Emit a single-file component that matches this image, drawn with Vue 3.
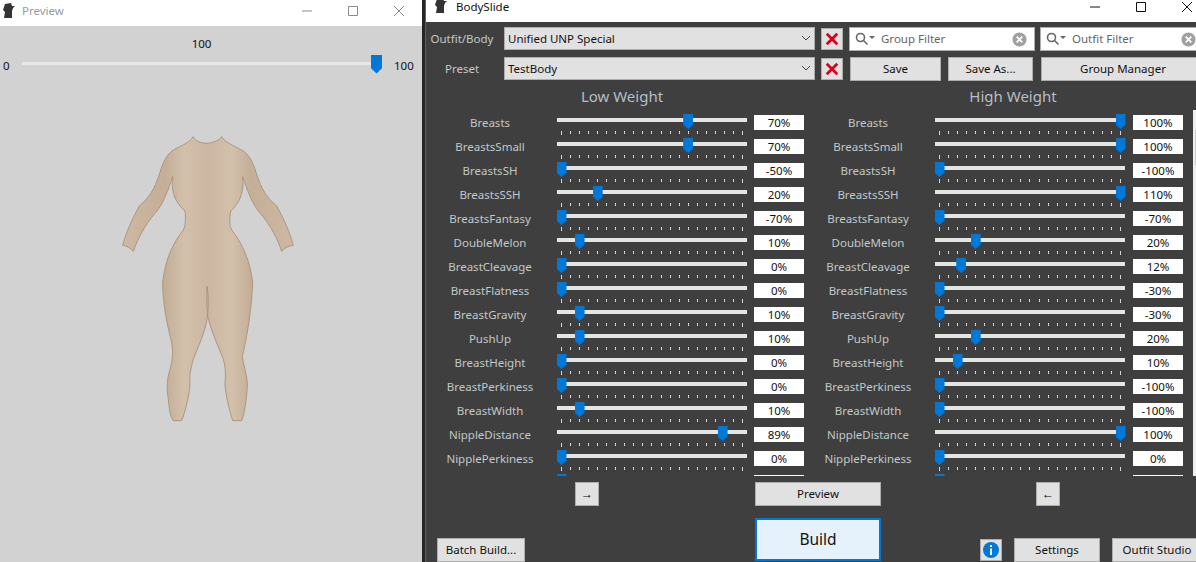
<template>
  <div class="desktop">
    <section class="preview">
      <header class="titlebar preview-bar">
        <svg class="logo" viewBox="0 0 12 16"><path d="M2 1 8 0 9 3 12 3 10 5 9 8 9 15 1 15 2 9 0 7Z" /></svg>
        <span class="preview-title">Preview</span>
        <span class="spacer"></span>
        <span class="win"><svg viewBox="0 0 10 10"><path d="M0 5H10" /></svg></span>
        <span class="win"><svg viewBox="0 0 10 10"><path d="M.5 .5H9.500V9.500H.5Z" /></svg></span>
        <span class="win"><svg viewBox="0 0 10 10"><path d="M0 0 10 10M10 0 0 10" /></svg></span>
      </header>
      <div class="scale-value">100</div>
      <div class="scale">
        <span class="scale-min">0</span>
        <span class="scale-track"><i class="scale-thumb"></i></span>
        <span class="scale-max">100</span>
      </div>
      <svg class="figure" viewBox="0 0 600 900" role="img" aria-label="Body preview">
        <defs>
          <linearGradient id="skin" x1="0" x2="1" y1="0" y2="0">
            <stop offset="0" stop-color="#cdb9a3" />
            <stop offset=".25" stop-color="#c4ae98" />
            <stop offset=".36" stop-color="#d3c0ab" />
            <stop offset=".5" stop-color="#cbb7a2" />
            <stop offset=".64" stop-color="#d3c0ab" />
            <stop offset=".75" stop-color="#c4ae98" />
            <stop offset="1" stop-color="#cdb9a3" />
          </linearGradient>
        </defs>
        <path fill="url(#skin)" stroke="#ad9680" stroke-width="3" d="M250 32C240 50 215 58 190 72C170 85 158 110 148 145C133 190 118 215 88 240C66 280 48 320 38 358C50 360 62 365 70 376C85 335 103 300 135 262C160 235 175 190 188 152C184 190 190 225 225 255C228 280 226 300 220 312C190 350 165 400 158 470C158 530 170 590 185 650C190 680 188 700 180 730C170 760 170 790 175 820C178 850 180 870 190 884L215 884C225 860 240 800 240 770C238 750 240 735 250 700C265 660 285 620 292 575C296 540 296 510 291 480C290 510 290 540 294 575C305 620 325 660 340 700C350 735 345 755 345 780C350 820 360 860 368 884L395 884C405 860 412 800 412 770C410 740 400 720 397 690C410 640 425 550 428 470C420 400 395 350 365 312C358 300 358 280 362 255C395 225 402 190 398 152C411 190 426 235 451 262C483 300 501 335 515 376C525 365 535 360 550 358C540 320 522 280 500 240C470 215 455 190 440 145C430 110 418 85 395 72C370 58 345 50 335 32C330 45 300 52 290 52C275 52 255 45 250 32Z" />
      </svg>
    </section>

    <div class="divider"></div>

    <section class="bodyslide">
      <header class="titlebar main-bar">
        <svg class="logo main-logo" viewBox="0 0 12 16"><path d="M2 1 8 0 9 3 12 3 10 5 9 8 9 15 1 15 2 9 0 7Z" /></svg>
        <span class="main-title">BodySlide</span>
        <span class="spacer"></span>
        <span class="win"><svg viewBox="0 0 10 10"><path d="M0 5H10" /></svg></span>
        <span class="win"><svg viewBox="0 0 10 10"><path d="M.5 .5H9.500V9.500H.5Z" /></svg></span>
        <span class="win"><svg viewBox="0 0 10 10"><path d="M0 0 10 10M10 0 0 10" /></svg></span>
      </header>

      <div class="toolbar first">
        <label class="tool-label">Outfit/Body</label>
        <div class="combo">Unified UNP Special<svg viewBox="0 0 10 6"><path d="M1 1 5 5 9 1" /></svg></div>
        <button class="remove"><svg viewBox="0 0 16 16"><path d="M2 2 14 14M14 2 2 14" /></svg></button>
        <div class="search group">
          <svg class="lens" viewBox="0 0 20 14"><circle cx="5.500" cy="5.500" r="4" /><path d="M8.500 8.500 12.500 12.500" /><path class="caret" d="M14 4H20L17 7Z" /></svg>
          <span class="search-text">Group Filter</span>
          <svg class="clear" viewBox="0 0 16 16"><circle cx="8" cy="8" r="7.500" /><path d="M5 5 11 11M11 5 5 11" /></svg>
        </div>
        <div class="search outfit">
          <svg class="lens" viewBox="0 0 20 14"><circle cx="5.500" cy="5.500" r="4" /><path d="M8.500 8.500 12.500 12.500" /><path class="caret" d="M14 4H20L17 7Z" /></svg>
          <span class="search-text">Outfit Filter</span>
          <svg class="clear" viewBox="0 0 16 16"><circle cx="8" cy="8" r="7.500" /><path d="M5 5 11 11M11 5 5 11" /></svg>
        </div>
      </div>

      <div class="toolbar second">
        <label class="tool-label">Preset</label>
        <div class="combo">TestBody<svg viewBox="0 0 10 6"><path d="M1 1 5 5 9 1" /></svg></div>
        <button class="remove"><svg viewBox="0 0 16 16"><path d="M2 2 14 14M14 2 2 14" /></svg></button>
        <button class="btn save">Save</button>
        <button class="btn save-as">Save As...</button>
        <button class="btn manager">Group Manager</button>
      </div>

      <div class="headings">
        <h2>Low Weight</h2>
        <h2>High Weight</h2>
      </div>

      <div class="sliders">
        <div class="columns">
          <div v-for="(side, i) in sides" :key="i" class="column" :class="{ high: i === 1 }">
            <div v-for="row in rows" :key="row.name" class="row">
              <span class="row-label">{{ row.name }}</span>
              <div class="slider">
                <i class="track"></i>
                <i class="thumb" :style="{ left: thumbLeft(row[side]) }"></i>
                <div class="ticks"><i v-for="n in 21" :key="n"></i></div>
              </div>
              <span class="value">{{ row[side] }}%</span>
            </div>
            <div class="row">
              <span class="row-label"></span>
              <div class="slider"><i class="thumb" style="left: -0.5px"></i></div>
              <span class="value"></span>
            </div>
          </div>
        </div>
        <div class="scrollbar"><i></i></div>
      </div>

      <div class="actions">
        <button class="btn arrow to-high">→</button>
        <button class="btn preview-btn">Preview</button>
        <button class="btn arrow to-low">←</button>
      </div>

      <div class="footer">
        <button class="btn batch">Batch Build...</button>
        <button class="build">Build</button>
        <button class="btn info">
          <svg viewBox="0 0 16 16"><circle cx="8" cy="8" r="8" /><rect x="7" y="3" width="2" height="2" /><rect x="7" y="6.500" width="2" height="6.500" /></svg>
        </button>
        <button class="btn settings">Settings</button>
        <button class="btn studio">Outfit Studio</button>
      </div>
    </section>
  </div>
</template>

<script setup>
const sides = ['low', 'high']

const rows = [
  { name: 'Breasts', low: 70, high: 100 },
  { name: 'BreastsSmall', low: 70, high: 100 },
  { name: 'BreastsSH', low: -50, high: -100 },
  { name: 'BreastsSSH', low: 20, high: 110 },
  { name: 'BreastsFantasy', low: -70, high: -70 },
  { name: 'DoubleMelon', low: 10, high: 20 },
  { name: 'BreastCleavage', low: 0, high: 12 },
  { name: 'BreastFlatness', low: 0, high: -30 },
  { name: 'BreastGravity', low: 10, high: -30 },
  { name: 'PushUp', low: 10, high: 20 },
  { name: 'BreastHeight', low: 0, high: 10 },
  { name: 'BreastPerkiness', low: 0, high: -100 },
  { name: 'BreastWidth', low: 10, high: -100 },
  { name: 'NippleDistance', low: 89, high: 100 },
  { name: 'NipplePerkiness', low: 0, high: 0 }
]

function thumbLeft(value) {
  const clamped = Math.min(100, Math.max(0, value))
  return `${clamped * 1.81 - 0.5}px`
}
</script>

<style>
html,
body {
  margin: 0;
  overflow: hidden;
  background: #3f3f3f;
}
</style>

<style scoped>
.desktop {
  display: flex;
  width: 1196px;
  height: 562px;
  overflow: hidden;
  font: 11.5px/16px "Noto Sans", "Open Sans", sans-serif;
}

.preview {
  flex: 0 0 422px;
  height: 562px;
  overflow: hidden;
  background: #d2d2d2;
  color: #111;
}

.divider {
  flex: 0 0 3px;
  background: #262626;
}

.bodyslide {
  flex: 0 0 782px;
  height: 562px;
  box-sizing: border-box;
  border-left: 1px solid #0078d7;
  background: #3f3f3f;
  color: #c2c8c8;
}

.titlebar {
  display: flex;
  background: #fff;
}

.preview-bar {
  height: 26px;
  padding-left: 3px;
  padding-bottom: 4px;
  box-sizing: border-box;
  align-items: center;
}

.main-bar {
  height: 22px;
  padding-left: 9px;
  padding-bottom: 8px;
  box-sizing: border-box;
  align-items: center;
  line-height: 14px;
}

.logo {
  width: 12px;
  height: 16px;
  fill: #333;
}

.main-logo {
  margin-top: -3px;
}

.preview-title {
  margin-left: 7px;
  color: #9a9a9a;
}

.main-title {
  margin-left: 9px;
  color: #111;
}

.spacer {
  flex: 1;
}

.win {
  display: flex;
  flex: 0 0 46px;
  justify-content: center;
}

.win svg {
  width: 10px;
  height: 10px;
  fill: none;
  stroke: #111;
  stroke-width: 1;
}

.preview-bar .win svg {
  stroke: #8c8c8c;
}

.scale-value {
  margin-top: 10px;
  padding-right: 19px;
  text-align: center;
}

.scale {
  display: flex;
  align-items: center;
  height: 20px;
  margin-top: 2px;
}

.scale-min {
  flex: 0 0 22px;
  padding-left: 3px;
  box-sizing: border-box;
  margin-top: 3px;
}

.scale-track {
  position: relative;
  flex: 0 0 350px;
  height: 3px;
  margin-top: -2px;
  background: #e6e8e6;
}

.scale-thumb {
  position: absolute;
  top: -7px;
  right: -10px;
  width: 11px;
  height: 19px;
  background: #0078d7;
  clip-path: polygon(0 0, 100% 0, 100% 72%, 50% 100%, 0 72%);
}

.scale-max {
  margin-left: 22px;
  margin-top: 3px;
}

.figure {
  display: block;
  width: 200px;
  height: 300px;
  margin: 52px 0 0 110px;
}

.toolbar {
  display: flex;
  height: 24px;
  white-space: nowrap;
}

.first {
  margin-top: 5px;
}

.second {
  margin-top: 6px;
}

.tool-label {
  flex: 0 0 72px;
  margin-right: 6px;
  line-height: 24px;
  text-align: center;
}

.combo {
  position: relative;
  flex: 0 0 311px;
  box-sizing: border-box;
  height: 23px;
  padding-left: 3px;
  border: 1px solid #adadad;
  background: #e1e1e1;
  color: #111;
  line-height: 21px;
}

.combo svg {
  position: absolute;
  top: 7px;
  right: 3px;
  width: 10px;
  height: 6px;
  fill: none;
  stroke: #444;
}

.remove {
  flex: 0 0 22px;
  box-sizing: border-box;
  height: 22px;
  margin: 1px 0 0 6px;
  padding: 3px;
  border: 1px solid #adadad;
  background: #e1e1e1;
}

.remove svg {
  display: block;
  width: 14px;
  height: 14px;
  fill: none;
  stroke: #d9001b;
  stroke-width: 3.2;
}

.search {
  display: flex;
  align-items: center;
  box-sizing: border-box;
  height: 24px;
  border: 1px solid #adadad;
  background: #fff;
  color: #666;
}

.group {
  flex: 0 0 186px;
  margin-left: 6px;
}

.outfit {
  flex: 0 0 164px;
  margin-left: 5px;
}

.lens {
  width: 20px;
  height: 14px;
  margin-left: 5px;
  fill: none;
  stroke: #666;
  stroke-width: 1.6;
}

.lens .caret {
  fill: #666;
  stroke: none;
}

.search-text {
  flex: 1;
  margin-left: 6px;
}

.clear {
  width: 15px;
  height: 15px;
  margin-right: 7px;
  fill: #a0a0a0;
  stroke: none;
}

.clear path {
  fill: none;
  stroke: #fff;
  stroke-width: 1.8;
}

.btn {
  box-sizing: border-box;
  height: 24px;
  padding: 0;
  border: 1px solid #adadad;
  background: #e1e1e1;
  color: #111;
  font: inherit;
}

.save {
  flex: 0 0 91px;
  margin-left: 7px;
}

.save-as {
  flex: 0 0 85px;
  margin-left: 7px;
}

.manager {
  flex: 0 0 164px;
  margin-left: 8px;
}

.headings {
  display: grid;
  grid-template-columns: 392px 390px;
  height: 29px;
}

.headings h2 {
  margin: 0;
  color: #b4bec6;
  font-size: 15px;
  font-weight: 400;
  line-height: 30px;
  text-align: center;
}

.sliders {
  display: flex;
  height: 366px;
  overflow: hidden;
}

.columns {
  display: flex;
  flex: 0 0 767px;
  padding-left: 4px;
  box-sizing: border-box;
}

.column {
  flex: 0 0 374px;
  margin-right: 4px;
}

.column.high {
  flex: 0 0 375px;
  margin-right: 0;
}

.row {
  display: flex;
  height: 24px;
}

.row-label {
  flex: 0 0 120px;
  line-height: 26px;
  text-align: center;
}

.slider {
  position: relative;
  flex: 0 0 190px;
  height: 24px;
  margin-left: 7px;
}

.track {
  display: block;
  height: 4px;
  margin-top: 8px;
  background: #e3e6e3;
}

.thumb {
  position: absolute;
  top: 4px;
  width: 10px;
  height: 15px;
  background: #0078d7;
  clip-path: polygon(0 0, 100% 0, 100% 72%, 50% 100%, 0 72%);
}

.ticks {
  display: flex;
  justify-content: space-between;
  width: 182px;
  margin: 9px 0 0 4px;
}

.ticks i {
  width: 1px;
  height: 3px;
  background: #d6d6d6;
}

.ticks i:first-child,
.ticks i:last-child {
  height: 4px;
}

.value {
  flex: 0 0 50px;
  height: 15px;
  margin: 5px 0 0 7px;
  background: #fff;
  color: #111;
  line-height: 15px;
  text-align: center;
}

.high .value {
  margin-left: 8px;
}

.scrollbar {
  flex: 0 0 17px;
  background: #f0f0f0;
}

.scrollbar i {
  display: block;
  height: 35px;
  margin: 20px 0 0 2px;
  background: #cdcdcd;
}

.actions {
  display: flex;
  margin-top: 6px;
}

.arrow {
  flex: 0 0 24px;
  color: #000;
  font-family: "Liberation Sans", sans-serif;
  font-size: 12px;
}

.to-high {
  margin-left: 149px;
}

.preview-btn {
  flex: 0 0 126px;
  margin-left: 156px;
}

.to-low {
  margin-left: 155px;
}

.footer {
  display: flex;
  align-items: flex-start;
  height: 44px;
  margin-top: 12px;
}

.batch {
  flex: 0 0 88px;
  margin: 20px 0 0 11px;
}

.build {
  flex: 0 0 126px;
  box-sizing: border-box;
  height: 43px;
  margin-left: 230px;
  padding: 0 0 2px;
  border: 2px solid #0078d7;
  background: #e5f1fb;
  color: #111;
  font: 15.500px "Noto Sans", "Open Sans", sans-serif;
}

.info {
  flex: 0 0 22px;
  height: 22px;
  margin: 21px 0 0 99px;
  padding: 2px;
}

.info svg {
  display: block;
  width: 16px;
  height: 16px;
  fill: #0078d7;
}

.info rect {
  fill: #fff;
}

.settings {
  flex: 0 0 86px;
  margin: 20px 0 0 12px;
}

.studio {
  flex: 0 0 90px;
  margin: 20px 0 0 12px;
}
</style>
